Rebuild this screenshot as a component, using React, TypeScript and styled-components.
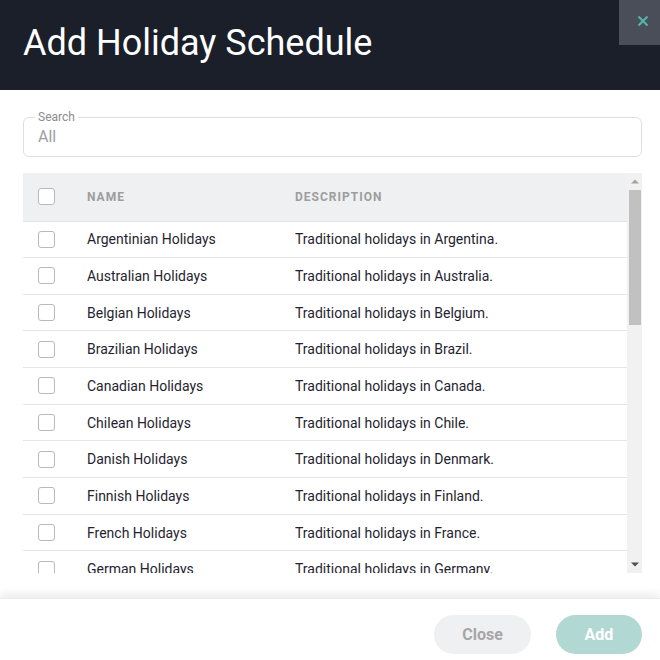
import React from "react";
import styled, { createGlobalStyle } from "styled-components";

const GlobalStyle = createGlobalStyle`
  html, body { margin: 0; padding: 0; background: #ffffff; }
  body { font-family: Roboto, "Liberation Sans", Arial, sans-serif; }
  * { box-sizing: border-box; }
`;

const Modal = styled.div`
  width: 660px;
  height: 660px;
  display: flex;
  flex-direction: column;
  background: #ffffff;
  overflow: hidden;
`;

const Header = styled.header`
  position: relative;
  height: 90px;
  flex: none;
  background: #1a1f29;
  display: flex;
  align-items: center;
  padding: 0 0 4px 23px;
`;

const Title = styled.h1`
  margin: 0;
  color: #ffffff;
  font-family: Roboto, "Liberation Sans", sans-serif;
  font-weight: 400;
  font-size: 36px;
  letter-spacing: 0;
`;

const CloseX = styled.button`
  position: absolute;
  top: 0;
  right: 0;
  width: 41px;
  height: 45px;
  border: none;
  background: #4a4e58;
  display: flex;
  align-items: center;
  justify-content: center;
  padding: 0 0 4px 6px;
  cursor: pointer;
`;

const Body = styled.main`
  flex: 1;
  display: flex;
  flex-direction: column;
  gap: 16px;
  padding: 21px 18px 0 23px;
`;

const SearchBox = styled.fieldset`
  margin: 0;
  height: 46px;
  border: 1px solid #dedfe1;
  border-radius: 6px;
  padding: 0 14px;
`;

const SearchLegend = styled.legend`
  padding: 0 3px;
  margin-left: -3px;
  font-size: 12px;
  line-height: 12px;
  color: #8c8c8c;
`;

const SearchValue = styled.div`
  font-size: 16px;
  color: #a0a0a0;
  line-height: 20px;
  margin-top: 4px;
`;

const TableFrame = styled.div`
  height: 400px;
  display: flex;
`;

const TableScroll = styled.div`
  flex: 1;
  overflow-y: auto;
  scrollbar-width: none;
  &::-webkit-scrollbar {
    display: none;
  }
`;

const ScrollBar = styled.div`
  width: 15px;
  flex: none;
  background: #f1f1f1;
  display: flex;
  flex-direction: column;
`;

const ScrollButton = styled.div`
  height: 17px;
  flex: none;
  display: flex;
  align-items: center;
  justify-content: center;
`;

const ScrollThumb = styled.div<{ $size: number }>`
  height: ${(p) => p.$size}px;
  margin: 0 1px 0 2px;
  background: #c1c1c1;
`;

const Spacer = styled.div`
  flex: 1;
`;

const HeadRow = styled.div`
  position: sticky;
  top: 0;
  display: grid;
  grid-template-columns: 64px 208px 1fr;
  align-items: center;
  height: 48.5px;
  background: #eff0f2;
  border-bottom: 1px solid #e2e3e5;
`;

const Row = styled.div`
  display: grid;
  grid-template-columns: 64px 208px 1fr;
  align-items: center;
  height: 36.67px;
  border-bottom: 1px solid #e4e5e7;
`;

const CheckCell = styled.div`
  padding-left: 15px;
  display: flex;
  align-items: center;
`;

const Check = styled.span`
  width: 17px;
  height: 17px;
  border: 1px solid #b9b9b9;
  border-radius: 3px;
  background: #ffffff;
  display: block;
`;

const HeadLabel = styled.div`
  font-size: 12px;
  font-weight: 700;
  letter-spacing: 1px;
  color: #9d9d9d;
  text-transform: uppercase;
`;

const Cell = styled.div`
  font-size: 14px;
  color: #1f2430;
  white-space: nowrap;
`;

const Footer = styled.footer`
  flex: none;
  height: 63px;
  margin-top: 25px;
  background: #ffffff;
  box-shadow: 0 -5px 8px rgba(0, 0, 0, 0.07);
  border-top: 1px solid #ebebeb;
  display: flex;
  justify-content: flex-end;
  align-items: flex-start;
  gap: 25px;
  padding: 16px 18px 0 0;
`;

const Btn = styled.button<{ $primary?: boolean }>`
  height: 39px;
  width: ${(p) => (p.$primary ? "86px" : "97px")};
  border: none;
  border-radius: 20px;
  font-family: Roboto, "Liberation Sans", sans-serif;
  font-size: 16px;
  font-weight: 700;
  background: ${(p) => (p.$primary ? "#b2d8d4" : "#eff0f2")};
  color: ${(p) => (p.$primary ? "#ffffff" : "#a6a6a6")};
  cursor: pointer;
`;

const countries: [string, string][] = [
  ["Argentinian", "Argentina"],
  ["Australian", "Australia"],
  ["Belgian", "Belgium"],
  ["Brazilian", "Brazil"],
  ["Canadian", "Canada"],
  ["Chilean", "Chile"],
  ["Danish", "Denmark"],
  ["Finnish", "Finland"],
  ["French", "France"],
  ["German", "Germany"],
  ["Indian", "India"],
  ["Irish", "Ireland"],
  ["Italian", "Italy"],
  ["Japanese", "Japan"],
  ["Korean", "Korea"],
  ["Mexican", "Mexico"],
  ["New Zealand", "New Zealand"],
  ["Norwegian", "Norway"],
  ["Polish", "Poland"],
  ["Portuguese", "Portugal"],
  ["Russian", "Russia"],
  ["Singaporean", "Singapore"],
  ["South African", "South Africa"],
  ["Spanish", "Spain"],
  ["Swedish", "Sweden"],
  ["Swiss", "Switzerland"],
  ["UK", "the United Kingdom"],
  ["US", "the United States"],
];

export default function App() {
  return (
    <Modal>
      <GlobalStyle />
      <Header>
        <Title>Add Holiday Schedule</Title>
        <CloseX aria-label="Close">
          <svg width="12" height="12" viewBox="0 0 12 12">
            <path d="M1.5 1.5 L10.5 10.5 M10.5 1.5 L1.5 10.5" stroke="#56b5ac" strokeWidth="2" strokeLinecap="butt" />
          </svg>
        </CloseX>
      </Header>
      <Body>
        <SearchBox>
          <SearchLegend>Search</SearchLegend>
          <SearchValue>All</SearchValue>
        </SearchBox>
        <TableFrame>
          <TableScroll>
            <HeadRow>
              <CheckCell>
                <Check />
              </CheckCell>
              <HeadLabel>Name</HeadLabel>
              <HeadLabel>Description</HeadLabel>
            </HeadRow>
            {countries.map(([adj, place]) => (
              <Row key={adj}>
                <CheckCell>
                  <Check />
                </CheckCell>
                <Cell>{adj} Holidays</Cell>
                <Cell>Traditional holidays in {place}.</Cell>
              </Row>
            ))}
          </TableScroll>
          <ScrollBar aria-hidden="true">
            <ScrollButton>
              <svg width="8" height="5" viewBox="0 0 8 5">
                <path d="M0 4.5 L4 0.5 L8 4.5 Z" fill="#a3a3a3" />
              </svg>
            </ScrollButton>
            <ScrollThumb $size={135} />
            <Spacer />
            <ScrollButton>
              <svg width="8" height="5" viewBox="0 0 8 5">
                <path d="M0 0.5 L8 0.5 L4 4.5 Z" fill="#505050" />
              </svg>
            </ScrollButton>
          </ScrollBar>
        </TableFrame>
      </Body>
      <Footer>
        <Btn>Close</Btn>
        <Btn $primary>Add</Btn>
      </Footer>
    </Modal>
  );
}
